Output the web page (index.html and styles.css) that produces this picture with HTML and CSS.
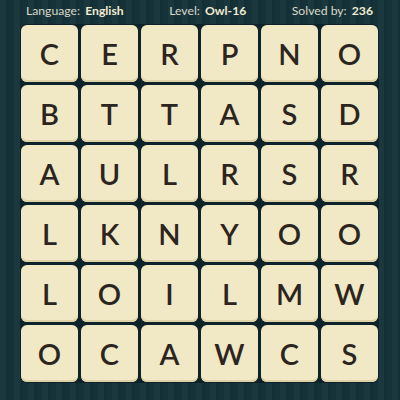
FILE: index.html
```html
<!DOCTYPE html>
<html>
<head>
<meta charset="utf-8">
<link rel="stylesheet" href="styles.css">
</head>
<body>
<div class="page">
  <div class="header">
    <div class="stat">Language: <b>English</b></div>
    <div class="stat">Level: <b>Owl-16</b></div>
    <div class="stat">Solved by: <b>236</b></div>
  </div>
  <div class="grid">
    <div class="tile">C</div><div class="tile">E</div><div class="tile">R</div><div class="tile">P</div><div class="tile">N</div><div class="tile">O</div>
    <div class="tile">B</div><div class="tile">T</div><div class="tile">T</div><div class="tile">A</div><div class="tile">S</div><div class="tile">D</div>
    <div class="tile">A</div><div class="tile">U</div><div class="tile">L</div><div class="tile">R</div><div class="tile">S</div><div class="tile">R</div>
    <div class="tile">L</div><div class="tile">K</div><div class="tile">N</div><div class="tile">Y</div><div class="tile">O</div><div class="tile">O</div>
    <div class="tile">L</div><div class="tile">O</div><div class="tile">I</div><div class="tile">L</div><div class="tile">M</div><div class="tile">W</div>
    <div class="tile">O</div><div class="tile">C</div><div class="tile">A</div><div class="tile">W</div><div class="tile">C</div><div class="tile">S</div>
  </div>
</div>
</body>
</html>
```
FILE: styles.css
```css
html, body {
  margin: 0;
  padding: 0;
}
body {
  width: 400px;
  height: 400px;
  overflow: hidden;
  background-color: #153239;
  background-image: repeating-linear-gradient(90deg,
    rgba(255,255,255,0.03) 0px, rgba(255,255,255,0.03) 6px,
    rgba(0,0,0,0.07) 6px, rgba(0,0,0,0.07) 9px,
    rgba(255,255,255,0) 9px, rgba(255,255,255,0) 14px);
  font-family: Lato, "Open Sans", sans-serif;
}
.page {
  display: flex;
  flex-direction: column;
}
.header {
  display: flex;
  justify-content: space-between;
  height: 25px;
  padding: 2px 27px 0 26px;
  box-sizing: border-box;
  font-size: 12.2px;
  color: #d9d8c6;
  line-height: 18px;
}
.header b {
  color: #f2ecd0;
  font-weight: 700;
  margin-left: 2px;
}
.grid {
  display: grid;
  grid-template-columns: repeat(6, 57px);
  grid-auto-rows: 57px;
  gap: 3px;
  margin-left: 21px;
  width: max-content;
  background: #0d2229;
  box-shadow: 0 0 0 1px #0d2229;
  border-radius: 6px;
}
.tile {
  background: #f1e9c5;
  border-radius: 6px;
  box-shadow: inset 0 -2px 0 #ddd2a8;
  display: flex;
  align-items: center;
  justify-content: center;
  font-size: 29px;
  font-weight: 600;
  color: #2c251f;
  letter-spacing: 0;
}
```
